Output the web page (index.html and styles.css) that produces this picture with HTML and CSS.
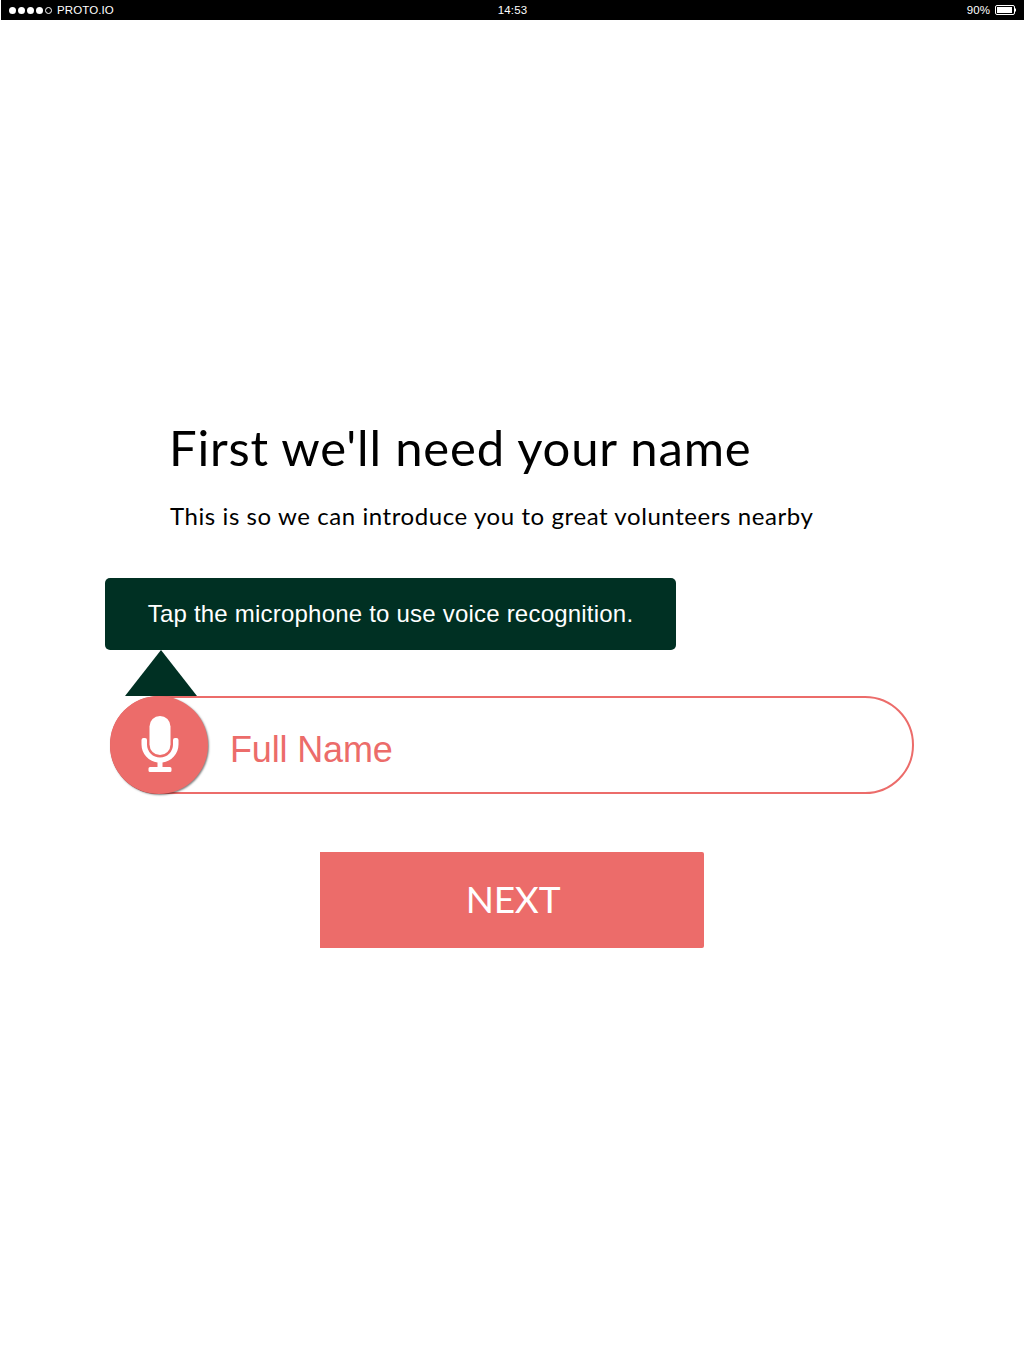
FILE: index.html
```html
<!DOCTYPE html>
<html lang="en">
<head>
<meta charset="utf-8">
<title>Your name</title>
<link rel="stylesheet" href="styles.css">
</head>
<body>
<header class="status-bar">
  <div class="carrier">
    <span class="signal"><i></i><i></i><i></i><i></i><i class="empty"></i></span>
    <span class="carrier-name">PROTO.IO</span>
  </div>
  <time class="clock">14:53</time>
  <div class="power">
    <span class="percent">90%</span>
    <svg width="21" height="10" viewBox="0 0 21 10"><rect x=".5" y=".5" width="19" height="9" rx="1.5" fill="none" stroke="#fff"/><path d="M2 2h15v6H2zM20 3.500h1v3h-1z" fill="#fff"/></svg>
  </div>
</header>
<main class="page">
  <h1 class="title"><span>First we'll need your name</span></h1>
  <p class="subtitle"><span>This is so we can introduce you to great volunteers nearby</span></p>
  <div class="tooltip"><span>Tap the microphone to use voice recognition.</span></div>
  <svg class="pointer" width="72" height="46" viewBox="0 0 72 46"><path d="M36 0L72 46H0z" fill="#003023"/></svg>
  <div class="field">
    <button class="mic" aria-label="Voice input">
      <svg width="38" height="56" viewBox="0 0 38 56"><rect x="8.500" y="0" width="21" height="39" rx="10.500" fill="#fff"/><path d="M.5 24q0-2 2-2h1.500q2 0 2 2v4.500a13 13 0 0 0 26 0V24q0-2 2-2h1.500q2 0 2 2v4.500A18.500 18.500 0 0 1 21.500 46.600V51H29q1.500 0 1.500 1.500v2Q30.500 56 29 56H9q-1.500 0-1.500-1.500v-2Q7.500 51 9 51h7.500v-4.400A18.500 18.500 0 0 1 .5 28.500z" fill="#fff"/></svg>
    </button>
    <span class="placeholder">Full Name</span>
  </div>
  <button class="next"><span>NEXT</span></button>
</main>
</body>
</html>
```
FILE: styles.css
```css
* { box-sizing: border-box; }
body {
  margin: 0;
  min-height: 1366px;
  background: #fff;
  color: #000;
  font-family: "Liberation Sans", Arial, sans-serif;
}
button { border: 0; padding: 0; }
.status-bar {
  display: grid;
  grid-template-columns: 1fr auto 1fr;
  align-items: center;
  height: 20px;
  margin-left: 1px;
  padding: 0 8px;
  background: #000;
  color: #fff;
  font-size: 11.5px;
  letter-spacing: .1px;
  line-height: 20px;
}
.carrier, .power, .signal { display: flex; align-items: center; }
.carrier { gap: 5px; }
.signal { gap: 2px; }
.signal i { width: 7px; height: 7px; border-radius: 50%; background: #fff; }
.signal .empty { background: none; border: 1px solid #fff; }
.power { justify-content: flex-end; gap: 5px; }
.page { display: flex; flex-direction: column; align-items: flex-start; }
.title {
  margin: 394px 0 0 169px;
  font: 400 49px/66px Lato, sans-serif;
  letter-spacing: .83px;
  white-space: nowrap;
}
.subtitle {
  margin: 20px 0 0 170px;
  font: 400 24px/32px Lato, sans-serif;
  letter-spacing: .58px;
  white-space: nowrap;
}
.tooltip {
  display: flex;
  align-items: center;
  justify-content: center;
  width: 571px;
  height: 72px;
  margin: 46px 0 0 105px;
  border-radius: 5px;
  background: #003023;
  color: #fff;
  font-size: 24px;
  letter-spacing: .21px;
  white-space: nowrap;
}
.pointer { display: block; margin-left: 125px; }
.field {
  display: flex;
  align-items: center;
  width: 804px;
  height: 98px;
  margin-left: 110px;
  border: 2px solid #ec6c6a;
  border-radius: 49px;
}
.mic {
  display: flex;
  align-items: center;
  justify-content: center;
  flex: none;
  width: 98px;
  height: 98px;
  margin-left: -2px;
  padding: 0 0 2px 2px;
  border-radius: 50%;
  background: #ec6c6a;
  box-shadow: 1px 1px 2px rgba(0, 0, 0, .5);
}
.placeholder {
  margin: 10px 0 0 22px;
  color: #ec6c6a;
  font-size: 36px;
  letter-spacing: -.15px;
  line-height: 42px;
}
.next {
  width: 384px;
  height: 96px;
  margin: 58px 0 0 320px;
  padding: 0 0 2px 2px;
  border-radius: 0 2px 2px 0;
  background: #ec6c6a;
  color: #fff;
  font: 400 37px/94px Lato, sans-serif;
  letter-spacing: -.2px;
}
```
